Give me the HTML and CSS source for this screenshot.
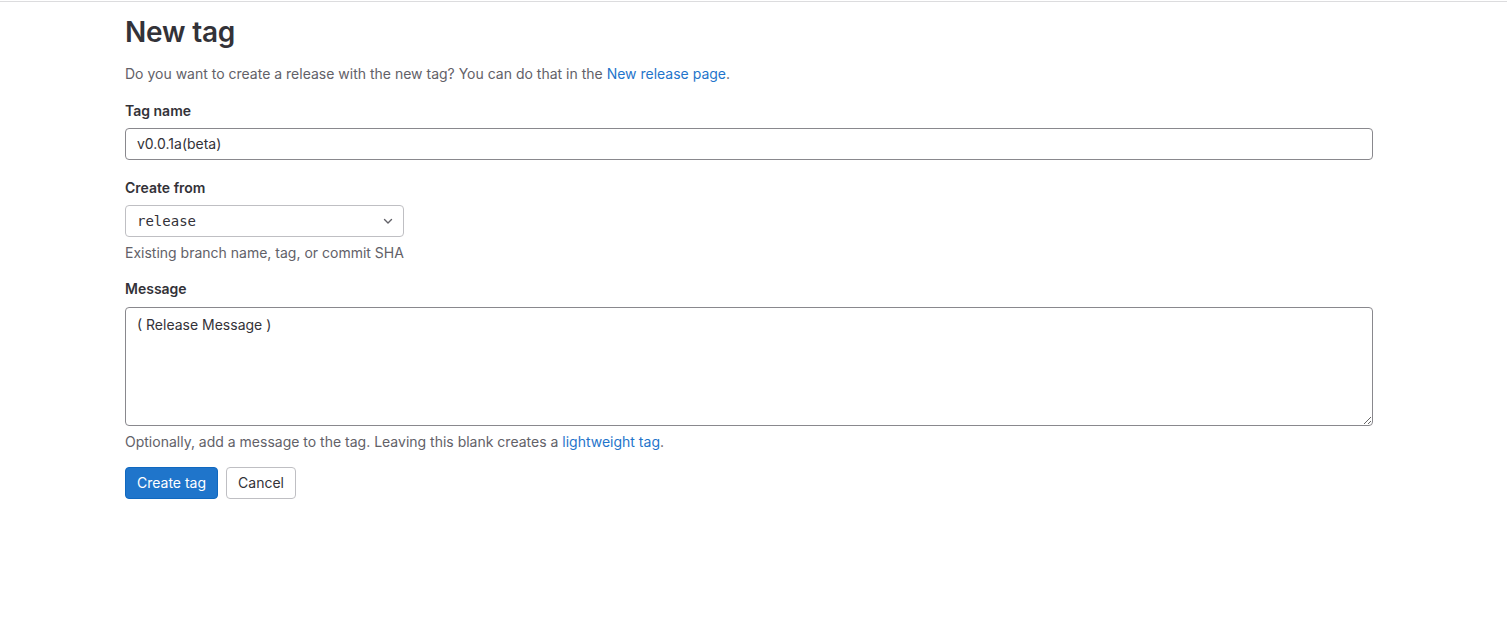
FILE: index.html
```html
<!DOCTYPE html>
<html lang="en">
<head>
    <meta charset="UTF-8">
    <meta name="viewport" content="width=device-width, initial-scale=1.0">
    <title>New tag</title>
    <link rel="stylesheet" href="styles.css">
</head>
<body>
    <div class="top-bar"></div>

    <div class="content">
        <h1>New tag</h1>
        <p class="intro">Do you want to create a release with the new tag? You can do that in the <a href="#">New release page</a>.</p>

        <form class="tag-form">
            <div class="form-group">
                <label for="tagName">Tag name</label>
                <input type="text" id="tagName" class="form-control" value="v0.0.1a(beta)">
            </div>

            <div class="form-group">
                <label for="ref">Create from</label>
                <div class="ref-select">
                    <span class="ref-name">release</span>
                    <svg class="chevron" width="16" height="16" viewBox="0 0 16 16"><path d="M4.5 6.5 8 10l3.5-3.5" fill="none" stroke="#626168" stroke-width="1.4" stroke-linecap="round" stroke-linejoin="round"/></svg>
                </div>
                <p class="help">Existing branch name, tag, or commit SHA</p>
            </div>

            <div class="form-group message-group">
                <label for="message">Message</label>
                <textarea id="message" class="form-control message">( Release Message )</textarea>
                <p class="help">Optionally, add a message to the tag. Leaving this blank creates a <a href="#">lightweight tag</a>.</p>
            </div>

            <div class="actions">
                <button type="button" class="btn btn-confirm">Create tag</button>
                <button type="button" class="btn btn-default">Cancel</button>
            </div>
        </form>
    </div>
</body>
</html>
```

FILE: styles.css
```css
body {
    margin: 0;
    font-family: Inter, "Noto Sans", sans-serif;
    font-size: 14px;
    color: #333238;
    background-color: #fff;
}

.top-bar {
    height: 1px;
    margin-top: 1px;
    background-color: #dcdcde;
}

.content {
    width: 1248px;
    margin-left: 125px;
}

h1 {
    font-size: 28px;
    font-weight: 600;
    line-height: 1.2;
    margin: 14px 0 0;
    letter-spacing: -0.2px;
}

.intro {
    color: #626168;
    margin: 14px 0 0;
    line-height: 20px;
}

a {
    color: #1f75cb;
    text-decoration: none;
}

.form-group {
    margin-top: 17px;
}

.form-group + .form-group {
    margin-top: 18px;
}

label {
    display: block;
    font-weight: 600;
    line-height: 20px;
    margin-bottom: 7px;
}

.message-group label {
    margin-bottom: 8px;
}

.form-control {
    display: block;
    width: 100%;
    box-sizing: border-box;
    height: 32px;
    padding: 6px 11px;
    border: 1px solid #89888d;
    border-radius: 4px;
    font-family: inherit;
    font-size: 14px;
    color: #333238;
    background: #fff;
}

.message {
    height: 119px;
    resize: vertical;
    padding-top: 8px;
    line-height: 18px;
}

.ref-select {
    display: flex;
    align-items: center;
    justify-content: space-between;
    box-sizing: border-box;
    width: 279px;
    height: 32px;
    padding: 0 7px 0 11px;
    border: 1px solid #bfbfc3;
    border-radius: 4px;
}

.ref-name {
    font-family: "DejaVu Sans Mono", "Liberation Mono", monospace;
    font-size: 14px;
}

.help {
    margin: 8px 0 0;
    color: #626168;
    line-height: 16px;
}

.actions {
    display: flex;
    gap: 8px;
    margin-top: 17px;
}

.btn {
    height: 32px;
    padding: 0 11px;
    border-radius: 4px;
    font-family: inherit;
    font-size: 14px;
    cursor: pointer;
}

.btn-confirm {
    background-color: #1f75cb;
    border: 1px solid #1068bf;
    color: #fff;
}

.btn-default {
    background-color: #fff;
    border: 1px solid #bfbfc3;
    color: #333238;
}
```
